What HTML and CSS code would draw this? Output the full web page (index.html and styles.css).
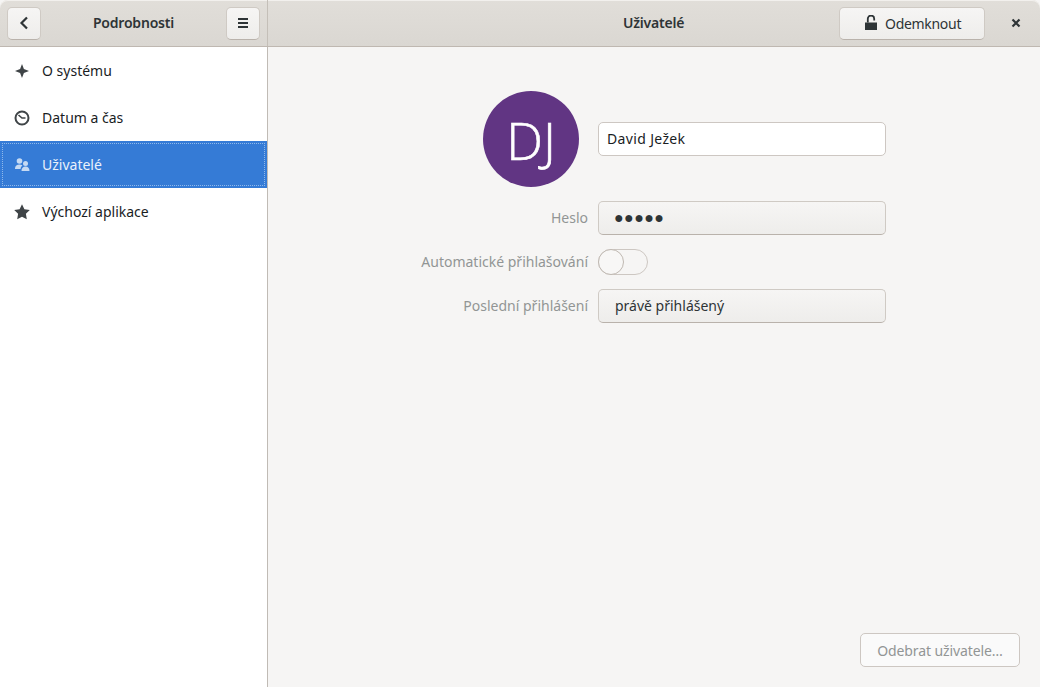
FILE: index.html
```html
<!DOCTYPE html>
<html lang="cs">
<head>
<meta charset="utf-8">
<title>Uživatelé</title>
<link rel="stylesheet" href="styles.css">
</head>
<body>
<div class="window">
  <header class="headerbar">
    <div class="head-left">
      <button class="btn icon-btn"><svg width="16" height="16" viewBox="0 0 16 16"><path d="M11 2.500 5.500 8l5.500 5.500" fill="none" stroke="#2e3436" stroke-width="2.200"/></svg></button>
      <span class="title left-title">Podrobnosti</span>
      <button class="btn icon-btn"><svg width="16" height="16" viewBox="0 0 16 16"><path d="M3 3h10v2H3zM3 7h10v2H3zM3 11h10v2H3z" fill="#2e3436"/></svg></button>
    </div>
    <div class="head-right">
      <span class="title main-title">Uživatelé</span>
      <button class="btn unlock-btn"><svg width="16" height="16" viewBox="0 0 16 16"><path d="M2 7.500h12V15H2z" fill="#2e3436"/><path d="M4.800 7.500V3.800a3.200 3.200 0 0 1 6.400 0V5.500" fill="none" stroke="#2e3436" stroke-width="1.800"/></svg><span>Odemknout</span></button>
      <button class="close-btn"><svg width="16" height="16" viewBox="0 0 16 16"><path d="m4.500 4.500 7 7m0-7-7 7" fill="none" stroke="#2e3436" stroke-width="2.200"/></svg></button>
    </div>
  </header>
  <div class="content">
    <nav class="sidebar">
      <div class="row">
        <svg class="row-icon" width="16" height="16" viewBox="0 0 16 16"><path d="M8 1l1.900 5.100L15 8l-5.100 1.900L8 15 6.100 9.900 1 8l5.100-1.900z" fill="#3f4447"/></svg>
        <span>O systému</span>
      </div>
      <div class="row">
        <svg class="row-icon" width="16" height="16" viewBox="0 0 16 16"><circle cx="8" cy="8" r="6.500" fill="none" stroke="#3f4447" stroke-width="2"/><path d="M4.500 5 8 8h3.500" fill="none" stroke="#3f4447" stroke-width="1.600"/></svg>
        <span>Datum a čas</span>
      </div>
      <div class="row selected">
        <svg class="row-icon" width="16" height="16" viewBox="0 0 16 16"><circle cx="5.500" cy="4" r="2.800" fill="#c6daf3"/><circle cx="11.500" cy="6.500" r="2.500" fill="#c6daf3"/><path d="M1 11.500C1 9 3 7.500 5.500 7.500c1.200 0 2.300.3 3 .9C7.300 9.300 6.600 10.300 6.600 12H1zM7.500 14c0-3 1.500-4.500 4-4.500s4 1.500 4 4.500z" fill="#c6daf3"/></svg>
        <span>Uživatelé</span>
      </div>
      <div class="row">
        <svg class="row-icon" width="16" height="16" viewBox="0 0 16 16"><path d="M8 .3l2.400 4.900 5.400.8-3.900 3.800.9 5.400L8 12.700l-4.800 2.500.9-5.400L.2 6l5.400-.8z" fill="#3f4447"/></svg>
        <span>Výchozí aplikace</span>
      </div>
    </nav>
    <main class="panel">
      <div class="form">
        <div class="avatar">DJ</div>
        <div class="entry">David Ježek</div>
        <div class="label">Heslo</div>
        <div class="btn field dots">●●●●●</div>
        <div class="label">Automatické přihlašování</div>
        <div class="switch"><span class="knob"></span></div>
        <div class="label">Poslední přihlášení</div>
        <div class="btn field">právě přihlášený</div>
      </div>
      <div class="footer">
        <button class="remove-btn">Odebrat uživatele…</button>
      </div>
    </main>
  </div>
</div>
</body>
</html>
```
FILE: styles.css
```css
* { box-sizing: border-box; }
html, body { margin: 0; height: 100%; }
body {
  font-family: "Noto Sans", sans-serif;
  font-size: 14px;
  color: #2e3436;
  background: #f6f5f4;
  overflow: hidden;
}
.window { width: 1040px; height: 687px; display: flex; flex-direction: column; }
.headerbar {
  height: 47px;
  flex: none;
  display: flex;
  background: linear-gradient(#e1ded9, #dad7d2);
  border-bottom: 1px solid #bfb8b1;
  border-radius: 8px 8px 0 0;
  box-shadow: inset 0 1px 0 #f2f0ed;
}
.head-left {
  width: 268px;
  flex: none;
  display: flex;
  align-items: center;
  justify-content: space-between;
  padding: 0 7px;
  border-right: 1px solid #c4bfb8;
}
.head-right {
  flex: 1;
  position: relative;
  display: flex;
  align-items: center;
  justify-content: flex-end;
  padding-right: 7px;
}
.title { font-weight: 600; color: #2e3436; letter-spacing: -0.2px; }
.left-title { margin-bottom: 2px; }
.main-title { position: absolute; left: 355px; top: 13px; line-height: 20px; }
.btn {
  border: 1px solid #cfcac4;
  border-bottom-color: #b9b2ab;
  border-radius: 5px;
  background: linear-gradient(#f6f5f4, #eeedeb);
  font: inherit;
  color: #2e3436;
}
.icon-btn {
  width: 34px;
  height: 33px;
  padding: 0;
  display: flex;
  align-items: center;
  justify-content: center;
}
.unlock-btn {
  width: 146px;
  height: 33px;
  padding: 0 0 0 23px;
  display: flex;
  align-items: center;
  gap: 6px;
  margin-right: 14px;
  letter-spacing: -0.3px;
}
.close-btn {
  width: 34px;
  height: 33px;
  padding: 0;
  border: 0;
  background: none;
  display: flex;
  align-items: center;
  justify-content: center;
}
.close-btn svg { display: block; }
.content { flex: 1; display: flex; min-height: 0; }
.sidebar {
  width: 268px;
  flex: none;
  background: #fff;
  border-right: 1px solid #c0bbb5;
  color: #1a1d1f;
}
.row {
  height: 47px;
  display: flex;
  align-items: center;
  gap: 12px;
  padding-left: 14px;
}
.row-icon { flex: none; }
.selected {
  background: #357bd6;
  color: #e9f1fb;
  outline: 1px dotted #8fb8ea;
  outline-offset: -3px;
}
.panel { flex: 1; display: flex; flex-direction: column; justify-content: space-between; }
.form {
  display: grid;
  grid-template-columns: 288px 288px;
  column-gap: 10px;
  row-gap: 14px;
  justify-content: start;
  align-items: center;
  margin: 44px 0 0 32px;
}
.avatar {
  width: 96px;
  height: 96px;
  border-radius: 50%;
  background: #613583;
  color: #fff;
  justify-self: end;
  margin-right: 9px;
  display: flex;
  align-items: center;
  justify-content: center;
  font-size: 52px;
  font-weight: 300;
  -webkit-text-stroke: 0.6px #fff;
  font-family: "Open Sans", sans-serif;
}
.entry {
  height: 34px;
  background: #fff;
  border: 1px solid #cdc7c2;
  border-radius: 5px;
  padding-left: 8px;
  line-height: 32px;
  color: #1a1d1f;
  letter-spacing: 0.35px;
}
.label { text-align: right; color: #929595; line-height: 20px; }
.field { height: 34px; padding-left: 16px; line-height: 32px; }
.dots { font-size: 16px; letter-spacing: 0.400px; padding-left: 15px; line-height: 30px; }
.switch {
  width: 50px;
  height: 26px;
  border: 1px solid #cdc7c2;
  border-radius: 13px;
  background: #f6f5f4;
  padding: 0;
}
.knob {
  display: block;
  width: 26px;
  height: 26px;
  margin: -1px;
  border: 1px solid #bfb8b1;
  border-radius: 50%;
  background: #f8f7f6;
}
.footer { display: flex; justify-content: flex-end; padding: 0 20px 20px 0; }
.remove-btn {
  width: 160px;
  height: 34px;
  border: 1px solid #cdc7c2;
  border-radius: 5px;
  background: #fafafa;
  color: #929595;
  font: inherit;
  padding: 0;
  letter-spacing: -0.1px;
}
```
